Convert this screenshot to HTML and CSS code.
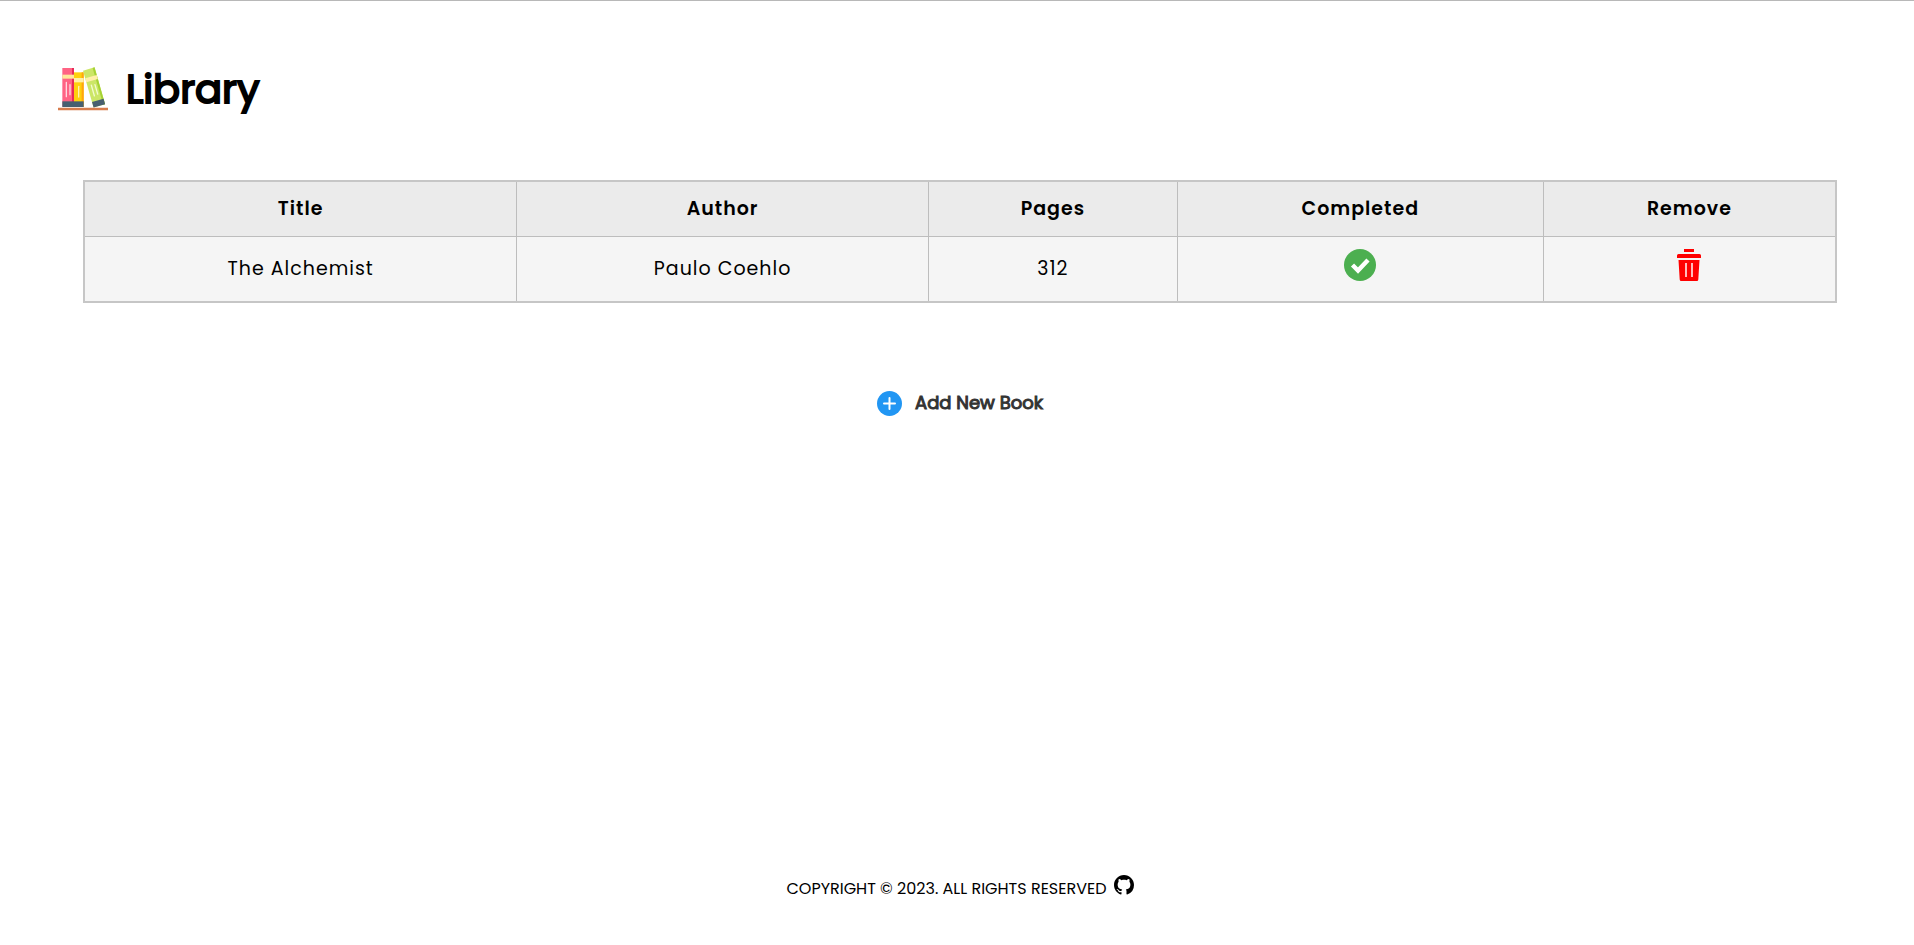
FILE: index.html
```
<!DOCTYPE html>
<html lang="en">
<head>
<meta charset="utf-8">
<title>Library</title>
<link rel="stylesheet" href="styles.css">
</head>
<body>
<header class="header">
  <svg class="logo" viewBox="0 0 150 150" aria-hidden="true">
    <path fill="#ff6384" d="M13 12h35v116H13z"/><path fill="#e72b58" d="M42 12h6v116h-6z"/>
    <path fill="#ffe79b" d="M13 32h35v12H13z"/>
    <path fill="#475f70" d="M13 112h35v17H13z"/>
    <path stroke="#ffd9e0" stroke-width="4" stroke-linecap="round" d="M25 55v43M36 62v30"/>
    <path fill="#ffd00d" d="M48 25h29v104H48z"/><path fill="#ffa50f" d="M71 25h6v104h-6z"/>
    <path fill="#fff0a8" d="M48 42h29v13H48z"/>
    <path fill="#475f70" d="M48 112h29v17H48z"/>
    <path stroke="#fff3b0" stroke-width="4" stroke-linecap="round" d="M62 67v32"/>
    <g transform="translate(75 20) rotate(-16)">
      <path fill="#cce667" d="M0 0h36v115H0z"/><path fill="#a5d235" d="M30 0h6v115h-6z"/>
      <path fill="#fff0a8" d="M0 24h36v12H0z"/>
      <path fill="#475f70" d="M0 98h36v17H0z"/>
      <path stroke="#f2fbd0" stroke-width="4" stroke-linecap="round" d="M12 49v33M23 50v30"/>
    </g>
    <path fill="#d67c4d" d="M0 131h150v8H0z"/>
  </svg>
  <h1 class="title">Library</h1>
</header>
<main class="main">
  <table class="books">
    <colgroup><col class="col-title"><col class="col-author"><col class="col-pages"><col class="col-completed"><col class="col-remove"></colgroup>
    <thead>
      <tr><th>Title</th><th>Author</th><th>Pages</th><th>Completed</th><th>Remove</th></tr>
    </thead>
    <tbody>
      <tr>
        <td>The Alchemist</td><td>Paulo Coehlo</td><td>312</td>
        <td class="action"><button class="icon-button" type="button" aria-label="Completed">
          <svg width="32" height="32" viewBox="0 0 32 32"><circle cx="16" cy="16" r="16" fill="#4caf50"/><path d="M8.500 16l5.500 5.500L24 11" fill="none" stroke="#fff" stroke-width="4.400"/></svg>
        </button></td>
        <td class="action"><button class="icon-button" type="button" aria-label="Remove">
          <svg width="32" height="32" viewBox="0 0 32 32"><path fill="red" d="M11 0h10v3H11zM5.500 5h21a1.500 1.500 0 0 1 1.500 1.500V9H4V6.500A1.500 1.500 0 0 1 5.500 5zM5.500 11h21l-1.200 19.500a1.500 1.500 0 0 1-1.500 1.500H8.200a1.500 1.500 0 0 1-1.500-1.500z"/><path stroke="#fbb" stroke-width="2" d="M13 14v14M19 14v14"/></svg>
        </button></td>
      </tr>
    </tbody>
  </table>
  <button class="add" type="button">
    <svg width="25" height="25" viewBox="0 0 25 25" aria-hidden="true"><circle cx="12.500" cy="12.500" r="12.500" fill="#2196f3"/><path stroke="#fff" stroke-width="2" stroke-linecap="round" d="M12.500 7v11M7 12.500h11"/></svg>
    <span>Add New Book</span>
  </button>
</main>
<footer class="footer">
  <span>COPYRIGHT © 2023. ALL RIGHTS RESERVED</span>
  <a class="github" href="#" aria-label="GitHub"><svg width="20" height="20" viewBox="0 0 16 16"><path d="M8 0C3.580 0 0 3.580 0 8c0 3.540 2.290 6.530 5.470 7.590.4.070.55-.17.55-.38 0-.19-.01-.82-.01-1.490-2.010.37-2.530-.49-2.690-.94-.09-.23-.48-.94-.82-1.130-.28-.15-.68-.52-.01-.53.63-.01 1.080.58 1.230.82.72 1.210 1.870.87 2.330.66.07-.52.28-.87.51-1.070-1.780-.2-3.640-.89-3.640-3.950 0-.87.31-1.590.82-2.150-.08-.2-.36-1.020.08-2.120 0 0 .67-.21 2.200.82.64-.18 1.320-.27 2-.27s1.360.09 2 .27c1.530-1.040 2.200-.82 2.200-.82.44 1.100.16 1.920.08 2.120.51.56.82 1.270.82 2.150 0 3.070-1.870 3.750-3.650 3.950.29.25.54.73.54 1.480 0 1.070-.01 1.930-.01 2.200 0 .21.15.46.55.38A8.010 8.010 0 0 0 16 8c0-4.420-3.580-8-8-8z"/></svg></a>
</footer>
</body>
</html>
```
FILE: styles.css
```
* { box-sizing: border-box; }

body {
  margin: 0;
  min-height: 100vh;
  display: flex;
  flex-direction: column;
  border-top: 1px solid #b8b8b8;
  background: #fff;
  color: #000;
  font-family: Poppins, Inter, "Open Sans", sans-serif;
}

button {
  border: 0;
  padding: 0;
  background: none;
  font: inherit;
  cursor: pointer;
}

svg { display: block; }

.header {
  display: flex;
  align-items: center;
  gap: 18px;
  padding: 56px 58px 0;
}

.logo { width: 50px; height: 50px; }

.title {
  margin: 0;
  font-size: 40px;
  line-height: 64px;
  font-weight: 400;
  -webkit-text-stroke: 2px currentColor;
}

.main {
  flex: 1;
  display: flex;
  flex-direction: column;
  align-items: center;
  padding: 59px 77px 0 83px;
}

.books {
  width: 100%;
  table-layout: fixed;
  border-collapse: collapse;
  border: 2px solid #c6c6c6;
  background: #f5f5f5;
  font-size: 19px;
  line-height: 30px;
  letter-spacing: 1px;
  text-align: center;
}

.col-title { width: 24.7%; }
.col-author { width: 23.5%; }
.col-pages { width: 14.2%; }
.col-completed { width: 20.9%; }
.col-remove { width: 16.7%; }

.books th,
.books td { border: 1px solid #bdbdbd; }

.books th {
  height: 55px;
  padding: 0 12px;
  background: #ebebeb;
  font-weight: 600;
}

.books td { height: 66px; padding: 0 12px; }

.books .action { padding-bottom: 8px; }

.icon-button { display: block; margin: 0 auto; }

.add {
  display: flex;
  align-items: center;
  gap: 13px;
  margin-top: 84px;
  color: #333;
  font-size: 18px;
  line-height: 32px;
  font-weight: 400;
  -webkit-text-stroke: 1px currentColor;
}

.footer {
  display: flex;
  justify-content: center;
  gap: 7px;
  padding: 0 77px 42px 83px;
  font-size: 16px;
  line-height: 28px;
}

.github { color: #000; }
```
